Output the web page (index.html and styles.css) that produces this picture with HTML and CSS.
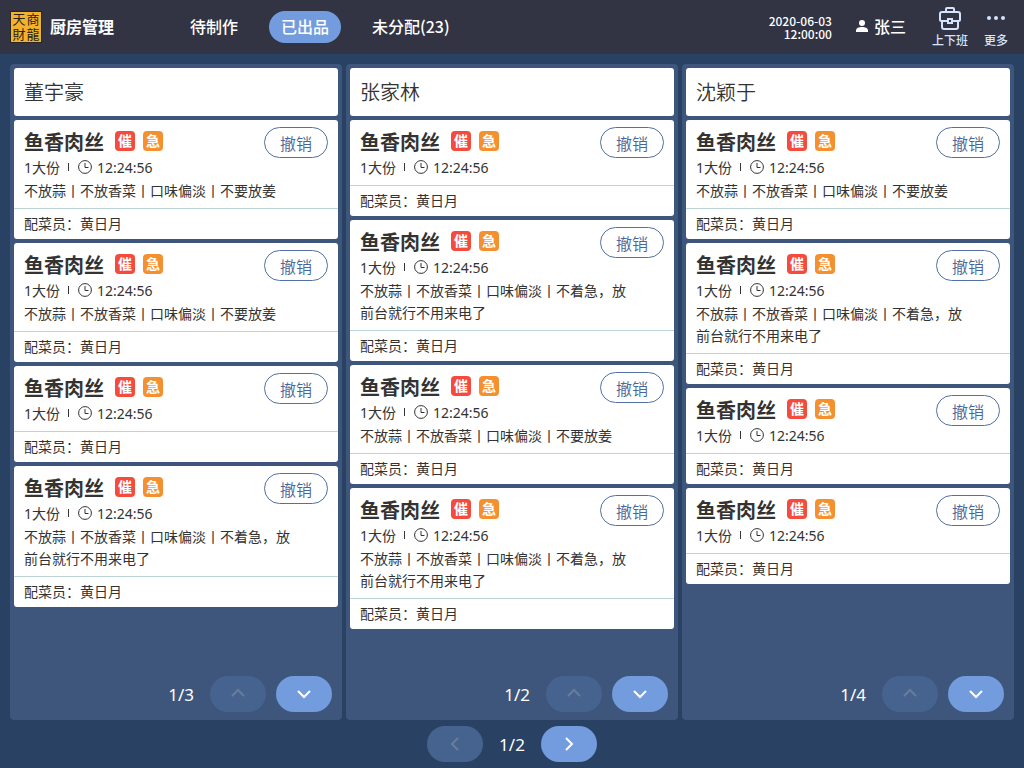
FILE: index.html
```html
<!DOCTYPE html>
<html lang="zh-CN">
<head>
    <meta charset="UTF-8">
    <meta name="viewport" content="width=device-width, initial-scale=1.0">
    <title>厨房管理</title>
    <link rel="stylesheet" href="styles.css">
</head>
<body>
    <svg class="sprite" aria-hidden="true">
        <symbol id="clock" viewBox="0 0 14 14">
            <circle cx="7" cy="7" r="6.4" fill="none" stroke="currentColor"/>
            <path d="M7 3v4.5h3.5" fill="none" stroke="currentColor"/>
        </symbol>
        <symbol id="up" viewBox="0 0 16 16">
            <path d="M2 10l6-6 6 6" fill="none" stroke="currentColor" stroke-width="2"/>
        </symbol>
        <symbol id="down" viewBox="0 0 16 16">
            <path d="M2 5l6 6 6-6" fill="none" stroke="currentColor" stroke-width="2"/>
        </symbol>
        <symbol id="left" viewBox="0 0 16 16">
            <path d="M11 2L5 8l6 6" fill="none" stroke="currentColor" stroke-width="2"/>
        </symbol>
        <symbol id="right" viewBox="0 0 16 16">
            <path d="M5 2l6 6-6 6" fill="none" stroke="currentColor" stroke-width="2"/>
        </symbol>
    </svg>

    <header class="topbar">
        <div class="logo"><span>天</span><span>商</span><span>財</span><span>龍</span></div>
        <h1>厨房管理</h1>
        <nav>
            <a href="#todo">待制作</a>
            <a href="#done" class="selected">已出品</a>
            <a href="#unassigned">未分配(23)</a>
        </nav>
        <time class="now">2020-06-03<br>12:00:00</time>
        <div class="user">
            <svg width="12" height="12" viewBox="0 0 12 12" fill="currentColor">
                <circle cx="6" cy="3" r="3"/>
                <path d="M0 12V10.500C0 8 3 7 6 7s6 1 6 3.500V12z"/>
            </svg>
            <span>张三</span>
        </div>
        <button class="tool shift">
            <svg width="24" height="24" viewBox="0 0 24 24" fill="none" stroke="currentColor" stroke-width="2">
                <path d="M8 6V3q0-1 1-1h6q1 0 1 1v3"/>
                <path d="M9.500 15H3.500Q2 15 2 13.500V8q0-2 2-2h16q2 0 2 2v5.500q0 1.500-1.500 1.500h-6"/>
                <path d="M4 15v6q0 2 2 2h12q2 0 2-2v-6"/>
                <rect x="10" y="13" width="4" height="4"/>
            </svg>
            上下班
        </button>
        <button class="tool">
            <svg width="24" height="24" viewBox="0 0 24 24" fill="currentColor">
                <circle cx="5" cy="12" r="2"/>
                <circle cx="12" cy="12" r="2"/>
                <circle cx="19" cy="12" r="2"/>
            </svg>
            更多
        </button>
    </header>

    <main id="board"></main>

    <footer class="pager">
        <button disabled aria-label="上一页"><svg width="16" height="16"><use href="#left"/></svg></button>
        <span>1/2</span>
        <button aria-label="下一页"><svg width="16" height="16"><use href="#right"/></svg></button>
    </footer>

    <script src="script.js"></script>
</body>
</html>
```
FILE: styles.css
```css
* {
	box-sizing: border-box;
}

body {
	display: flex;
	flex-direction: column;
	min-height: 100vh;
	margin: 0;
	background: #294162;
	color: #333;
	font-family: "Noto Sans", "Noto Sans CJK SC", sans-serif;
	font-size: 14px;
}

h1, h2, h3, p {
	margin: 0;
}

button {
	border: none;
	padding: 0;
	background: none;
	color: inherit;
	font-family: inherit;
	cursor: pointer;
}

svg {
	display: block;
}

.sprite {
	position: absolute;
	width: 0;
	height: 0;
}

/* top bar */
.topbar {
	display: flex;
	align-items: center;
	height: 54px;
	padding: 0 16px 0 10px;
	background: #323443;
	color: white;
	font-family: "Noto Sans CJK SC", sans-serif;
}

.logo {
	display: grid;
	grid-template-columns: 14px 14px;
	grid-template-rows: 15px 15px;
	place-content: center;
	width: 32px;
	height: 32px;
	border: 1px solid #2b2520;
	background: #f3b22e;
	color: #2b2215;
	font-family: "Liberation Sans", "Noto Sans CJK TC", sans-serif;
	font-size: 13px;
	line-height: 15px;
	text-align: center;
}

.topbar h1 {
	margin-left: 8px;
	padding-bottom: 2px;
	font-size: 16px;
	font-weight: 700;
}

nav {
	display: flex;
	gap: 19px;
	margin-left: 64px;
}

nav a {
	padding: 0 12px 2px;
	border-radius: 16px;
	color: white;
	font-size: 16px;
	font-weight: 500;
	line-height: 30px;
	text-decoration: none;
}

nav .selected {
	background: #739cde;
}

.now {
	margin-left: auto;
	padding-bottom: 1px;
	font-size: 12px;
	font-weight: 500;
	line-height: 13px;
	text-align: right;
}

.user {
	display: flex;
	align-items: center;
	gap: 6px;
	margin-left: 24px;
	padding-bottom: 2px;
	font-size: 16px;
	font-weight: 500;
}

.tool {
	display: flex;
	flex-direction: column;
	align-items: center;
	min-width: 24px;
	margin-left: 16px;
	padding-top: 2px;
	color: #d5e3ff;
	font-size: 12px;
	font-weight: 500;
	line-height: 20px;
}

.shift {
	margin-left: 26px;
}

/* columns */
#board {
	flex: 1;
	display: grid;
	grid-template-columns: repeat(3, 1fr);
	gap: 4px;
	padding: 10px 10px 0;
}

.column {
	display: flex;
	flex-direction: column;
	gap: 4px;
	padding: 4px;
	border-radius: 4px;
	background: #3e567c;
}

.column h2 {
	padding: 2px 10px 0;
	border-radius: 3px;
	background: white;
	font-size: 20px;
	font-weight: 350;
	line-height: 46px;
}

.card {
	border-radius: 3px;
	background: white;
}

.detail {
	padding: 7px 10px 6px;
}

.head {
	display: flex;
	justify-content: space-between;
	align-items: flex-start;
}

.dish {
	display: flex;
	align-items: center;
	gap: 8px;
	height: 28px;
}

.dish h3 {
	margin-right: 3px;
	padding-top: 4px;
	font-size: 20px;
	font-weight: 700;
	line-height: 28px;
}

.badge {
	width: 20px;
	border-radius: 4px;
	color: white;
	font-size: 14px;
	font-weight: 700;
	line-height: 20px;
	text-align: center;
}

.urge {
	background: #f44b3c;
}

.rush {
	background: #f4902f;
}

.meta {
	display: flex;
	align-items: center;
	height: 24px;
}

.bar {
	width: 1px;
	height: 8px;
	margin: 0 9px 0 8px;
	background: #333;
}

.meta time {
	margin-left: 5px;
}

.undo {
	width: 64px;
	height: 31px;
	border: 1px solid #5270a4;
	border-radius: 16px;
	color: #4a6597;
	font-size: 16px;
	font-weight: 350;
}

.note {
	max-width: 272px;
	margin-top: 1px;
	line-height: 22px;
}

.cook {
	padding: 0 10px;
	border-top: 1px solid #bdd5d8;
	line-height: 30px;
}

/* pagers */
.pager {
	display: flex;
	justify-content: center;
	align-items: center;
	gap: 16px;
	padding: 6px;
	color: white;
	font-size: 17px;
}

.pager button {
	display: flex;
	justify-content: center;
	align-items: center;
	width: 56px;
	height: 36px;
	border-radius: 18px;
	background: #739cde;
	color: white;
}

.pager button:disabled {
	background: #46638f;
	color: #687d97;
	cursor: default;
}

.column .pager {
	justify-content: flex-end;
	margin-top: auto;
	padding: 4px 6px;
}

.column .pager button + button {
	margin-left: -6px;
}
```
FILE: script.js
```js
var soft = "不放蒜丨不放香菜丨口味偏淡丨不要放姜";
var slow = "不放蒜丨不放香菜丨口味偏淡丨不着急，放前台就行不用来电了";

// one entry per cook, "" is a dish without a note
var columns = [
	{ name: "董宇豪", page: "1/3", notes: [soft, soft, "", slow] },
	{ name: "张家林", page: "1/2", notes: ["", slow, soft, slow] },
	{ name: "沈颖于", page: "1/4", notes: [soft, slow, "", ""] }
];

function cardHtml(note){
	return '<article class="card">' +
		'<div class="detail">' +
			'<div class="head">' +
				'<div>' +
					'<div class="dish"><h3>鱼香肉丝</h3><span class="badge urge">催</span><span class="badge rush">急</span></div>' +
					'<div class="meta"><span>1大份</span><span class="bar"></span><svg width="14" height="14"><use href="#clock"/></svg><time>12:24:56</time></div>' +
				'</div>' +
				'<button class="undo">撤销</button>' +
			'</div>' +
			(note ? '<p class="note">' + note + '</p>' : '') +
		'</div>' +
		'<p class="cook">配菜员：黄日月</p>' +
	'</article>';
}

function columnHtml(column){
	return '<section class="column">' +
		'<h2>' + column.name + '</h2>' +
		column.notes.map(cardHtml).join("") +
		'<div class="pager">' +
			'<span>' + column.page + '</span>' +
			'<button disabled aria-label="上翻"><svg width="16" height="16"><use href="#up"/></svg></button>' +
			'<button aria-label="下翻"><svg width="16" height="16"><use href="#down"/></svg></button>' +
		'</div>' +
	'</section>';
}

document.querySelector("#board").innerHTML = columns.map(columnHtml).join("");
```
